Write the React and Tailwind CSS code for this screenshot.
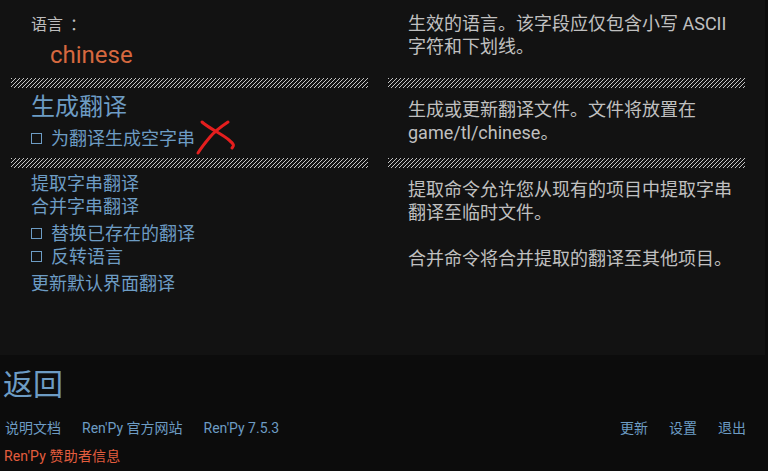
import React from "react";

const FONT = "font-['Roboto','Noto_Sans_CJK_SC',sans-serif]";

function Hatch() {
  return (
    <div className="h-[10px] bg-[image:repeating-linear-gradient(135deg,#c4c4c4_0px,#c4c4c4_0.8px,transparent_0.8px,transparent_2.83px)]" />
  );
}

function Check({ children, className = "" }) {
  return (
    <div className={"flex items-center h-[23px] " + className}>
      <div className="w-[11px] h-[11px] border border-[#6d9cc4] mr-[9px]" />
      <span>{children}</span>
    </div>
  );
}

export default function App() {
  return (
    <div className={"relative w-[768px] h-[471px] overflow-hidden bg-[#0c0c0c] flex flex-col " + FONT}>
      {/* top panel */}
      <div className="w-[765px] h-[355px] bg-[#121212] pl-[11px] pr-[20px] flex flex-col">
        {/* row 1 */}
        <div className="grid grid-cols-[357px_357px] gap-x-[20px] h-[78px]">
          <div className="pl-[20px] pt-[13px]">
            <div className="text-[16px] leading-[24px] text-[#bdbdbd]">
              语言<span className="ml-[7px]">：</span>
            </div>
            <div className="mt-[2px] ml-[19px] text-[24px] leading-[32px] text-[#d6683f]">chinese</div>
          </div>
          <div className="pl-[20px] pt-[12px] text-[18px] leading-[23px] text-[#c0c0c0]">
            <div>生效的语言。该字段应仅包含小写 ASCII</div>
            <div>字符和下划线。</div>
          </div>
        </div>
        <div className="grid grid-cols-[357px_357px] gap-x-[20px]">
          <Hatch />
          <Hatch />
        </div>
        {/* row 2 */}
        <div className="grid grid-cols-[357px_357px] gap-x-[20px] h-[70px]">
          <div className="pl-[20px] pt-[4px] text-[#6d9cc4]">
            <div className="text-[24px] leading-[30px]">生成翻译</div>
            <Check className="mt-[5px] text-[18px]">为翻译生成空字串</Check>
          </div>
          <div className="pl-[20px] pt-[10px] text-[18px] leading-[23px] text-[#c0c0c0]">
            <div>生成或更新翻译文件。文件将放置在</div>
            <div>game/tl/chinese。</div>
          </div>
        </div>
        <div className="grid grid-cols-[357px_357px] gap-x-[20px]">
          <Hatch />
          <Hatch />
        </div>
        {/* row 3 */}
        <div className="grid grid-cols-[357px_357px] gap-x-[20px] flex-1">
          <div className="pl-[20px] pt-[4px] text-[18px] leading-[23px] text-[#6d9cc4]">
            <div>提取字串翻译</div>
            <div>合并字串翻译</div>
            <Check className="mt-[4px]">替换已存在的翻译</Check>
            <Check>反转语言</Check>
            <div className="mt-[4px]">更新默认界面翻译</div>
          </div>
          <div className="pl-[20px] pt-[10px] text-[18px] leading-[23px] text-[#c0c0c0]">
            <div>提取命令允许您从现有的项目中提取字串</div>
            <div>翻译至临时文件。</div>
            <div className="mt-[23px]">合并命令将合并提取的翻译至其他项目。</div>
          </div>
        </div>
      </div>

      {/* bottom */}
      <div className="flex-1 flex flex-col">
        <div className="pl-[3px] pt-[12px] text-[30px] leading-[36px] text-[#6d9cc4]">返回</div>
        <div className="mt-[15px] flex justify-between text-[14px] leading-[20px] text-[#6d9cc4]">
          <div className="flex gap-x-[20px] pl-[5px]">
            <span>说明文档</span>
            <span className="ml-[1px]">Ren'Py 官方网站</span>
            <span className="ml-[1px]">Ren'Py 7.5.3</span>
          </div>
          <div className="flex gap-x-[21px] pr-[22px]">
            <span>更新</span>
            <span>设置</span>
            <span>退出</span>
          </div>
        </div>
        <div className="mt-[8px] pl-[4px] text-[14px] leading-[20px] tracking-[0.15px] text-[#e35d3e]">Ren'Py 赞助者信息</div>
      </div>

      {/* red annotation X */}
      <svg
        className="absolute left-[194px] top-[118px]"
        width="44"
        height="40"
        viewBox="0 0 44 40"
        fill="none"
        stroke="#e41e1e"
        strokeWidth="3"
        strokeLinecap="round"
      >
        <path d="M8 4 C 16 11, 28 16, 35 22 S 39 28, 38 30" />
        <path d="M34 4 C 28 8, 21 13, 16 19 S 7 30, 4 35" />
      </svg>
    </div>
  );
}
